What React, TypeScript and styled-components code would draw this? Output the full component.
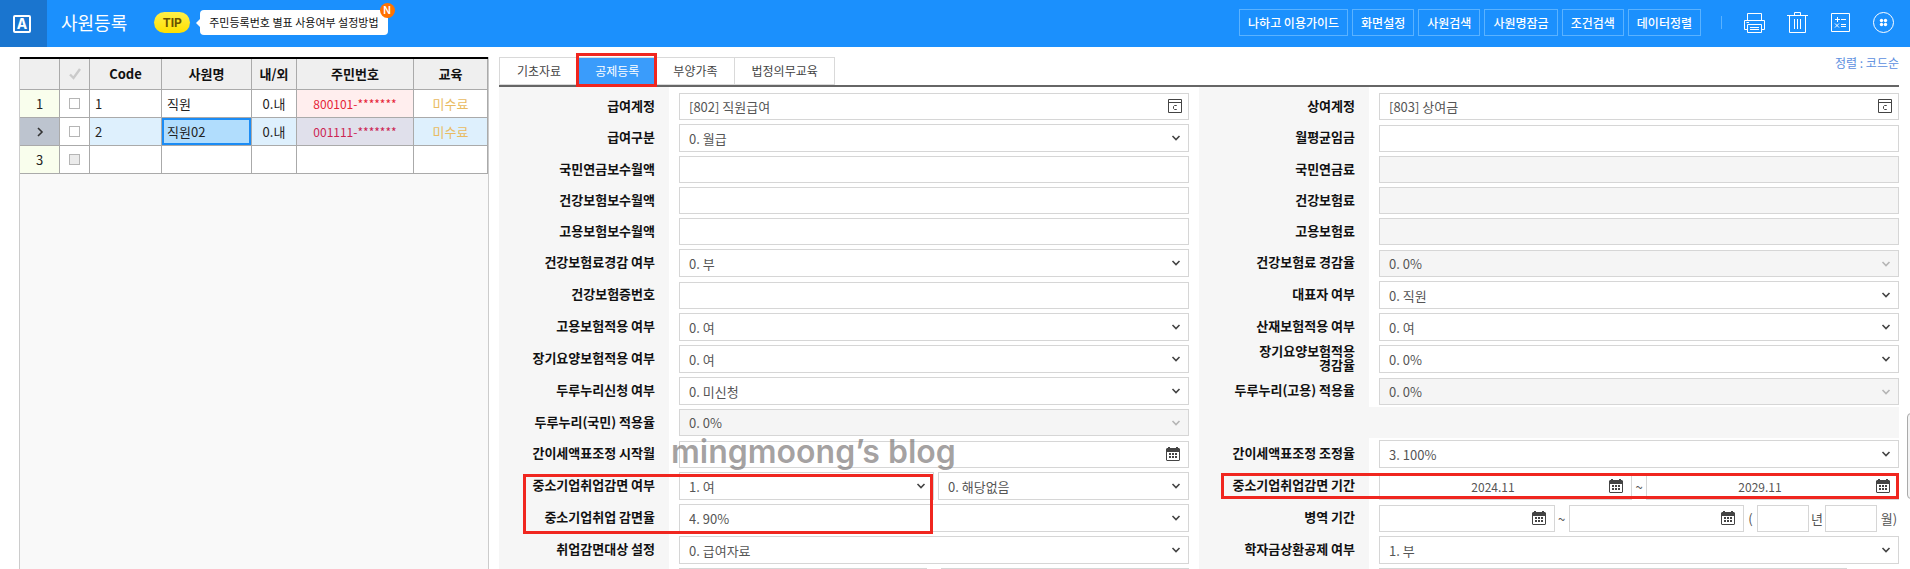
import React from "react";
import styled, { createGlobalStyle, css } from "styled-components";

const GlobalStyle = createGlobalStyle`
  *, *::before, *::after { box-sizing: border-box; }
  body { margin: 0; background: #fff; }
  body, button, input, select, table {
    font-family: "Noto Sans CJK KR", "Noto Sans", sans-serif;
  }
`;

const Page = styled.div`
  position: relative;
  display: flex;
  flex-direction: column;
  height: 100vh;
  overflow: hidden;
  color: #222;
  font-size: 13px;
`;

/* ---------- top bar ---------- */

const TopBar = styled.header`
  display: flex;
  flex: none;
  height: 47px;
  background: #1b90fd;
  color: #fff;
`;

const Brand = styled.div`
  display: flex;
  align-items: center;
  justify-content: center;
  width: 47px;
  padding-right: 3px;
  background: #1a75cf;
`;

const BrandMark = styled.span`
  width: 18px;
  height: 18px;
  border: 2px solid #fff;
  border-radius: 2px;
  font: 700 14px/14px Inter, sans-serif;
  text-align: center;
`;

const TopContent = styled.div`
  display: flex;
  flex: 1;
  align-items: center;
  padding: 0 15px 2px 14px;
  white-space: nowrap;
`;

const Title = styled.h1`
  margin: 0 27px 0 0;
  padding-bottom: 2px;
  font-size: 18px;
  font-weight: 400;
  line-height: 24px;
`;

const TipPill = styled.span`
  width: 36px;
  height: 21px;
  margin-right: 10px;
  border-radius: 11px;
  background: linear-gradient(#fff04a, #ffe000);
  color: #6b5200;
  font: 700 12px/21px Inter, sans-serif;
  text-align: center;
`;

const TipBubble = styled.a`
  position: relative;
  height: 25px;
  padding: 0 9px;
  border-radius: 4px;
  background: #fff;
  color: #111;
  font-size: 11px;
  line-height: 25px;
  text-decoration: none;

  &::before {
    content: "";
    position: absolute;
    top: 8px;
    left: -4px;
    border: 5px solid transparent;
    border-left-width: 0;
    border-right-color: #fff;
  }
`;

const NewBadge = styled.span`
  position: absolute;
  top: -7px;
  right: -7px;
  width: 15px;
  height: 15px;
  border-radius: 50%;
  background: #ff7200;
  color: #fff;
  font: 600 10px/15px Inter, sans-serif;
  text-align: center;
`;

const Actions = styled.nav`
  display: flex;
  gap: 4px;
  margin-left: auto;
`;

const ActionButton = styled.button`
  height: 27px;
  padding: 0 8px;
  border: 1px solid #5ab2ff;
  background: transparent;
  color: #fff;
  font-size: 12px;
  font-weight: 500;
  line-height: 25px;
`;

const Divider = styled.span`
  width: 1px;
  height: 13px;
  margin: 0 22px 0 20px;
  background: #5ab2ff;
`;

const Tools = styled.div`
  display: flex;
  gap: 21px;
`;

const IconButton = styled.button`
  width: 22px;
  height: 22px;
  padding: 0;
  border: 0;
  background: none;
  color: inherit;

  svg { display: block; }
`;

/* ---------- body ---------- */

const Main = styled.main`
  display: grid;
  flex: 1;
  grid-template-columns: 470px minmax(0, 1fr);
  gap: 10px;
  min-height: 0;
  padding: 10px 11px 0 19px;
`;

const ListPanel = styled.section`
  border: 1px solid #ccc;
  border-width: 0 1px;
  background: #f9f9f9;
`;

const EmployeeTable = styled.table`
  width: 100%;
  border-top: 2px solid #000;
  border-spacing: 0;
  table-layout: fixed;
`;

const cellBox = css`
  padding: 0 5px;
  border: 1px solid #aaa;
  border-width: 0 1px 1px 0;
  line-height: 20px;
  white-space: nowrap;
`;

const HeadCell = styled.th`
  ${cellBox}
  height: 31px;
  background: #efefef;
  color: #111;
  font-weight: 700;

  svg { display: block; margin: auto; }
`;

type Tone = "plain" | "secret" | "pending";

const Cell = styled.td<{ $center?: boolean; $row?: boolean; $focus?: boolean; $tone?: Tone }>`
  ${cellBox}
  height: 28px;
  text-align: ${(p) => (p.$center ? "center" : "left")};
  background: ${(p) =>
    p.$focus ? "#b1ddfd" : p.$tone === "secret" ? (p.$row ? "#e0e0eb" : "#ffeeee") : p.$row ? "#def0fd" : "#fff"};
  color: ${(p) =>
    p.$tone === "secret" ? (p.$row ? "#cc2452" : "#e62336") : p.$tone === "pending" ? "#e9bb62" : "#222"};
  font-size: ${(p) => (p.$tone === "secret" ? "12px" : "13px")};
  box-shadow: ${(p) => (p.$focus ? "inset 0 0 0 2px #1b8cf5" : "none")};
`;

const NumberCell = styled.th<{ $current?: boolean }>`
  ${cellBox}
  height: 28px;
  background: ${(p) => (p.$current ? "#bdc4cf" : "#f9feed")};
  font-weight: 400;

  svg { display: block; margin: auto; }
`;

const Check = styled.input`
  display: block;
  width: 11px;
  height: 11px;
  margin: auto;
  border: 1px solid #b5b5b5;
  background: #fff;
  appearance: none;

  &:disabled { background: #ebebeb; }
`;

/* ---------- tabs ---------- */

const Detail = styled.section`
  display: flex;
  flex-direction: column;
  min-width: 0;
`;

const TabBar = styled.div`
  display: flex;
  flex: none;
  height: 30px;
  border-bottom: 2px solid #666;
`;

const Tab = styled.button<{ $active?: boolean }>`
  position: relative;
  padding: 0 16px 0 17px;
  border: 1px solid #d9d9d9;
  border-right-width: 0;
  background: ${(p) => (p.$active ? "#3a9cfb" : "#fff")};
  color: ${(p) => (p.$active ? "#fff" : "#444")};
  font-size: 12px;
  line-height: 26px;

  &:last-child { border-right-width: 1px; }
`;

const Tabs = styled.div`
  display: flex;
`;

const SortInfo = styled.p`
  margin: 0 0 0 auto;
  color: #5c8fe0;
  font-size: 12px;
  line-height: 12px;
`;

const TabMark = styled.span`
  position: absolute;
  inset: -5px -2px -3px -2px;
  z-index: 1;
  border: 3px solid #f0261f;
  pointer-events: none;
`;

/* ---------- form ---------- */

const FormGrid = styled.form`
  position: relative;
  display: grid;
  grid-template-columns: 170px minmax(0, 1fr) 170px minmax(0, 1fr);
`;

const Label = styled.label<{ $first?: boolean }>`
  display: flex;
  align-items: center;
  justify-content: flex-end;
  padding: ${(p) => (p.$first ? "4px" : "0")} 14px 2px 0;
  background: #f6f6f6;
  color: #111;
  font-weight: 700;
  line-height: 14px;
  text-align: right;
  white-space: pre-line;
`;

const Field = styled.div<{ $first?: boolean; $last?: boolean; $gap?: number }>`
  display: flex;
  align-items: center;
  gap: ${(p) => p.$gap ?? 4}px;
  padding: ${(p) => (p.$first ? "6px" : "2px")} ${(p) => (p.$last ? "0" : "10px")} 2px 10px;
  color: #555;
`;

const BlankBand = styled.div`
  grid-column: span 2;
  background: #f6f6f6;
`;

const Control = styled.div<{ $basis?: string }>`
  position: relative;
  flex: ${(p) => (p.$basis ? `0 0 ${p.$basis}` : "1 1 0")};
  min-width: 0;
`;

const TextInput = styled.input<{ $center?: boolean }>`
  display: block;
  width: 100%;
  height: 27px;
  padding: 0 ${(p) => (p.$center ? "25px" : "9px")} 0 ${(p) => (p.$center ? "0" : "9px")};
  border: 1px solid #d6d6d6;
  border-radius: 0;
  background: #fff;
  color: #555;
  font-size: ${(p) => (p.$center ? "12px" : "13px")};
  text-align: ${(p) => (p.$center ? "center" : "left")};

  &:disabled { background: #f5f5f5; }
`;

const SelectBox = styled.select`
  display: block;
  width: 100%;
  height: 28px;
  padding: 0 24px 0 9px;
  border: 1px solid #d6d6d6;
  border-radius: 0;
  background: #fff;
  color: #555;
  font-size: 13px;
  opacity: 1;
  appearance: none;

  &:disabled { height: 27px; background: #f5f5f5; }
`;

const Chevron = styled.svg<{ $muted?: boolean }>`
  position: absolute;
  top: 10px;
  right: 8px;
  color: ${(p) => (p.$muted ? "#b5b5b5" : "#444")};
  pointer-events: none;
`;

const FieldButton = styled.button<{ $right: number }>`
  position: absolute;
  top: 6px;
  right: ${(p) => p.$right}px;
  padding: 0;
  border: 0;
  background: none;
  color: #444;

  svg { display: block; }
`;

const Tilde = styled.span`
  width: 10px;
  text-align: center;
`;

const Unit = styled.span<{ $width: number }>`
  flex: none;
  width: ${(p) => p.$width}px;
  text-align: center;
  white-space: nowrap;
`;

const Highlight = styled.div<{ $side: "left" | "right" }>`
  position: absolute;
  z-index: 1;
  border: 3px solid #f0261f;
  pointer-events: none;
  ${(p) =>
    p.$side === "left"
      ? css`
          grid-area: 13 / 1 / 15 / 3;
          inset: 4px calc((100% - 190px) / 2 + 11px) 0 24px;
        `
      : css`
          grid-area: 13 / 3 / 14 / 5;
          inset: 3px 0 3px 22px;
        `}
`;

const Watermark = styled.div`
  position: absolute;
  grid-area: 12 / 2 / 13 / 3;
  top: -4px;
  left: 2px;
  z-index: 2;
  color: rgba(118, 114, 114, 0.66);
  font: 600 32px/36px Inter, sans-serif;
  white-space: nowrap;
  pointer-events: none;
`;

const SideHandle = styled.button`
  position: absolute;
  top: 413px;
  right: -7px;
  width: 10px;
  height: 86px;
  padding: 0;
  border: 1px solid #aaa;
  border-radius: 4px;
  background: #f3f3f3;
`;

/* ---------- icons ---------- */

const Line = (props: React.SVGProps<SVGSVGElement>) => (
  <svg width="22" height="22" viewBox="0 0 22 22" fill="none" stroke="currentColor" aria-hidden="true" {...props} />
);

const PrinterIcon = () => (
  <Line>
    <path d="M3.500 8.500V1.500H17.500V8.500M3.500 17.500H.5V8.500H20.500V17.500H17.500M3.500 12.500H17.500V20.500H3.500ZM6 15.500H15M6 17.500H15" />
    <path d="M2.500 10.500H5" />
  </Line>
);
const TrashIcon = () => (
  <Line>
    <path d="M0 3.500H21M7.500 3V.5H13.500V3M2.500 3.500V20.500H18.500V3.500M7.500 7V17M10.500 7V17M13.500 7V17" />
  </Line>
);
const CalcIcon = () => (
  <Line>
    <path d="M1.500 1.500H19.500V19.500H1.500Z" />
    <path d="M5 7.500H10M7.500 5V10M11 7.500H16M11 12.500H16M11 14.500H16M5 11.500L9 15.500M9 11.500L5 15.500" />
  </Line>
);
const GridIcon = () => (
  <Line>
    <circle cx="10.500" cy="10.500" r="10" />
    <g fill="currentColor" stroke="none">
      <circle cx="8.500" cy="8.500" r="1.700" />
      <circle cx="12.500" cy="8.500" r="1.700" />
      <circle cx="8.500" cy="12.500" r="1.700" />
      <circle cx="12.500" cy="12.500" r="1.700" />
    </g>
  </Line>
);
const CodeIcon = () => (
  <svg width="14" height="15" viewBox="0 0 14 15" fill="none" stroke="currentColor" aria-hidden="true">
    <path d="M.5.500H13.500V13.500H.5ZM.5 3.500H13.500" />
    <path d="M8.500 7V6.500H6.500L5.500 7.500V9.500L6.500 10.500H8.500V10" />
  </svg>
);
const CalendarIcon = () => (
  <svg width="14" height="15" viewBox="0 0 14 15" fill="currentColor" aria-hidden="true">
    <path d="M1 1H2V0H4V1H10V0H12V1H13L14 2V13L13 14H1L0 13V2ZM1 5V13H13V5Z" fillRule="evenodd" />
    <path d="M3 6h2v2H3zM6 6h2v2H6zM9 6h2v2H9zM3 9h2v2H3zM6 9h2v2H6zM9 9h2v2H9z" />
  </svg>
);

/* ---------- field helpers ---------- */

function Select({ id, value, disabled, basis, label }: { id?: string; value: string; disabled?: boolean; basis?: string; label?: string }) {
  return (
    <Control $basis={basis}>
      <SelectBox id={id} disabled={disabled} defaultValue={value} aria-label={label}>
        <option>{value}</option>
      </SelectBox>
      <Chevron $muted={disabled} width="10" height="8" viewBox="0 0 10 8" fill="none" stroke="currentColor" strokeWidth="1.6" aria-hidden="true">
        <path d="M1.500 2L5 5.500L8.500 2" />
      </Chevron>
    </Control>
  );
}

function DateInput({ id, value, label }: { id?: string; value?: string; label: string }) {
  return (
    <Control>
      <TextInput $center id={id} defaultValue={value} aria-label={id ? undefined : label} />
      <FieldButton $right={9} type="button" aria-label={`${label} 달력`}>
        <CalendarIcon />
      </FieldButton>
    </Control>
  );
}

type Item = { label: string; kind: "code" | "select" | "text" | "date" | "blank" | "custom"; value?: string; off?: boolean };

const leftItems: Item[] = [
  { label: "급여계정", kind: "code", value: "[802] 직원급여" },
  { label: "급여구분", kind: "select", value: "0. 월급" },
  { label: "국민연금보수월액", kind: "text" },
  { label: "건강보험보수월액", kind: "text" },
  { label: "고용보험보수월액", kind: "text" },
  { label: "건강보험료경감 여부", kind: "select", value: "0. 부" },
  { label: "건강보험증번호", kind: "text" },
  { label: "고용보험적용 여부", kind: "select", value: "0. 여" },
  { label: "장기요양보험적용 여부", kind: "select", value: "0. 여" },
  { label: "두루누리신청 여부", kind: "select", value: "0. 미신청" },
  { label: "두루누리(국민) 적용율", kind: "select", value: "0. 0%", off: true },
  { label: "간이세액표조정 시작월", kind: "date" },
  { label: "중소기업취업감면 여부", kind: "custom" },
  { label: "중소기업취업 감면율", kind: "select", value: "4. 90%" },
  { label: "취업감면대상 설정", kind: "select", value: "0. 급여자료" },
];

const rightItems: Item[] = [
  { label: "상여계정", kind: "code", value: "[803] 상여금" },
  { label: "월평균임금", kind: "text" },
  { label: "국민연금료", kind: "text", off: true },
  { label: "건강보험료", kind: "text", off: true },
  { label: "고용보험료", kind: "text", off: true },
  { label: "건강보험료 경감율", kind: "select", value: "0. 0%", off: true },
  { label: "대표자 여부", kind: "select", value: "0. 직원" },
  { label: "산재보험적용 여부", kind: "select", value: "0. 여" },
  { label: "장기요양보험적용\n경감율", kind: "select", value: "0. 0%" },
  { label: "두루누리(고용) 적용율", kind: "select", value: "0. 0%", off: true },
  { label: "", kind: "blank" },
  { label: "간이세액표조정 조정율", kind: "select", value: "3. 100%" },
  { label: "중소기업취업감면 기간", kind: "custom" },
  { label: "병역 기간", kind: "custom" },
  { label: "학자금상환공제 여부", kind: "select", value: "1. 부" },
];

function customField(label: string, id: string) {
  if (label === "중소기업취업감면 여부")
    return (
      <>
        <Select id={id} value="1. 여" basis="50%" />
        <Select value="0. 해당없음" label="감면 구분" />
      </>
    );
  if (label === "중소기업취업감면 기간")
    return (
      <>
        <DateInput id={id} value="2024.11" label="감면 시작" />
        <Tilde>~</Tilde>
        <DateInput value="2029.11" label="감면 종료" />
      </>
    );
  return (
    <>
      <DateInput id={id} label="병역 시작" />
      <Tilde>~</Tilde>
      <DateInput label="병역 종료" />
      <Unit $width={9}>(</Unit>
      <Control $basis="52px"><TextInput aria-label="병역 년수" /></Control>
      <Unit $width={12}>년</Unit>
      <Control $basis="52px"><TextInput aria-label="병역 월수" /></Control>
      <Unit $width={20}>월)</Unit>
    </>
  );
}

function FormCell({ item, index, right }: { item: Item; index: number; right?: boolean }) {
  const id = `${right ? "r" : "l"}${index}`;
  const first = index === 0;
  if (item.kind === "blank") return <BlankBand />;
  return (
    <>
      <Label htmlFor={id} $first={first}>{item.label}</Label>
      <Field $first={first} $last={right} $gap={right ? 2 : 4}>
        {item.kind === "select" && <Select id={id} value={item.value!} disabled={item.off} />}
        {item.kind === "text" && <Control><TextInput id={id} disabled={item.off} /></Control>}
        {item.kind === "date" && <DateInput id={id} label={item.label} />}
        {item.kind === "code" && (
          <Control>
            <TextInput id={id} defaultValue={item.value} />
            <FieldButton $right={7} type="button" aria-label={`${item.label} 코드 찾기`}><CodeIcon /></FieldButton>
          </Control>
        )}
        {item.kind === "custom" && customField(item.label, id)}
      </Field>
    </>
  );
}

const employees = [
  { no: 1, name: "직원", id: "800101-*******", current: false },
  { no: 2, name: "직원02", id: "001111-*******", current: true },
];

export default function App() {
  return (
    <Page>
      <GlobalStyle />
      <TopBar>
        <Brand><BrandMark>A</BrandMark></Brand>
        <TopContent>
          <Title>사원등록</Title>
          <TipPill>TIP</TipPill>
          <TipBubble href="#tip">
            주민등록번호 별표 사용여부 설정방법
            <NewBadge>N</NewBadge>
          </TipBubble>
          <Actions>
            {["나하고 이용가이드", "화면설정", "사원검색", "사원명잠금", "조건검색", "데이터정렬"].map((t) => (
              <ActionButton key={t} type="button">{t}</ActionButton>
            ))}
          </Actions>
          <Divider />
          <Tools>
            <IconButton type="button" aria-label="인쇄"><PrinterIcon /></IconButton>
            <IconButton type="button" aria-label="삭제"><TrashIcon /></IconButton>
            <IconButton type="button" aria-label="계산기"><CalcIcon /></IconButton>
            <IconButton type="button" aria-label="더보기"><GridIcon /></IconButton>
          </Tools>
        </TopContent>
      </TopBar>

      <Main>
        <ListPanel>
          <EmployeeTable>
            <colgroup>
              {[40, 30, 72, 90, 45, 117, 74].map((w, i) => <col key={i} width={w} />)}
            </colgroup>
            <thead>
              <tr>
                <HeadCell />
                <HeadCell>
                  <svg width="12" height="12" viewBox="0 0 12 12" fill="none" stroke="#cacaca" strokeWidth="2.400" aria-hidden="true">
                    <path d="M1 6.500L4.500 10L11 1" />
                  </svg>
                </HeadCell>
                {["Code", "사원명", "내/외", "주민번호", "교육"].map((h) => <HeadCell key={h} scope="col">{h}</HeadCell>)}
              </tr>
            </thead>
            <tbody>
              {employees.map((e) => (
                <tr key={e.no}>
                  <NumberCell scope="row" $current={e.current}>
                    {e.current ? (
                      <svg width="8" height="10" viewBox="0 0 8 10" fill="none" stroke="#333" strokeWidth="1.600" aria-label="현재 행">
                        <path d="M2 1L6 5L2 9" />
                      </svg>
                    ) : e.no}
                  </NumberCell>
                  <Cell><Check type="checkbox" aria-label={`${e.name} 선택`} /></Cell>
                  <Cell $row={e.current}>{e.no}</Cell>
                  <Cell $row={e.current} $focus={e.current}>{e.name}</Cell>
                  <Cell $row={e.current} $center>0.내</Cell>
                  <Cell $row={e.current} $center $tone="secret">{e.id}</Cell>
                  <Cell $row={e.current} $center $tone="pending">미수료</Cell>
                </tr>
              ))}
              <tr>
                <NumberCell scope="row">3</NumberCell>
                <Cell><Check type="checkbox" disabled aria-label="새 행 선택" /></Cell>
                <Cell /><Cell /><Cell /><Cell /><Cell />
              </tr>
            </tbody>
          </EmployeeTable>
        </ListPanel>

        <Detail>
          <TabBar>
            <Tabs role="tablist">
              {["기초자료", "공제등록", "부양가족", "법정의무교육"].map((t) => (
                <Tab key={t} type="button" role="tab" aria-selected={t === "공제등록"} $active={t === "공제등록"}>
                  {t}
                  {t === "공제등록" && <TabMark />}
                </Tab>
              ))}
            </Tabs>
            <SortInfo>정렬 : 코드순</SortInfo>
          </TabBar>
          <FormGrid>
            {leftItems.map((item, i) => (
              <React.Fragment key={i}>
                <FormCell item={item} index={i} />
                <FormCell item={rightItems[i]} index={i} right />
              </React.Fragment>
            ))}
            <Label as="div" />
            <Field $gap={14}>
              <Control><TextInput aria-label="추가 항목 시작" /></Control>
              <Control><TextInput aria-label="추가 항목 종료" /></Control>
            </Field>
            <Label as="div" />
            <Field $last>
              <Control $basis="90%"><TextInput aria-label="추가 항목" /></Control>
            </Field>
            <Watermark>mingmoong’s blog</Watermark>
            <Highlight $side="left" />
            <Highlight $side="right" />
          </FormGrid>
        </Detail>
      </Main>
      <SideHandle type="button" aria-label="패널 열기" />
    </Page>
  );
}
